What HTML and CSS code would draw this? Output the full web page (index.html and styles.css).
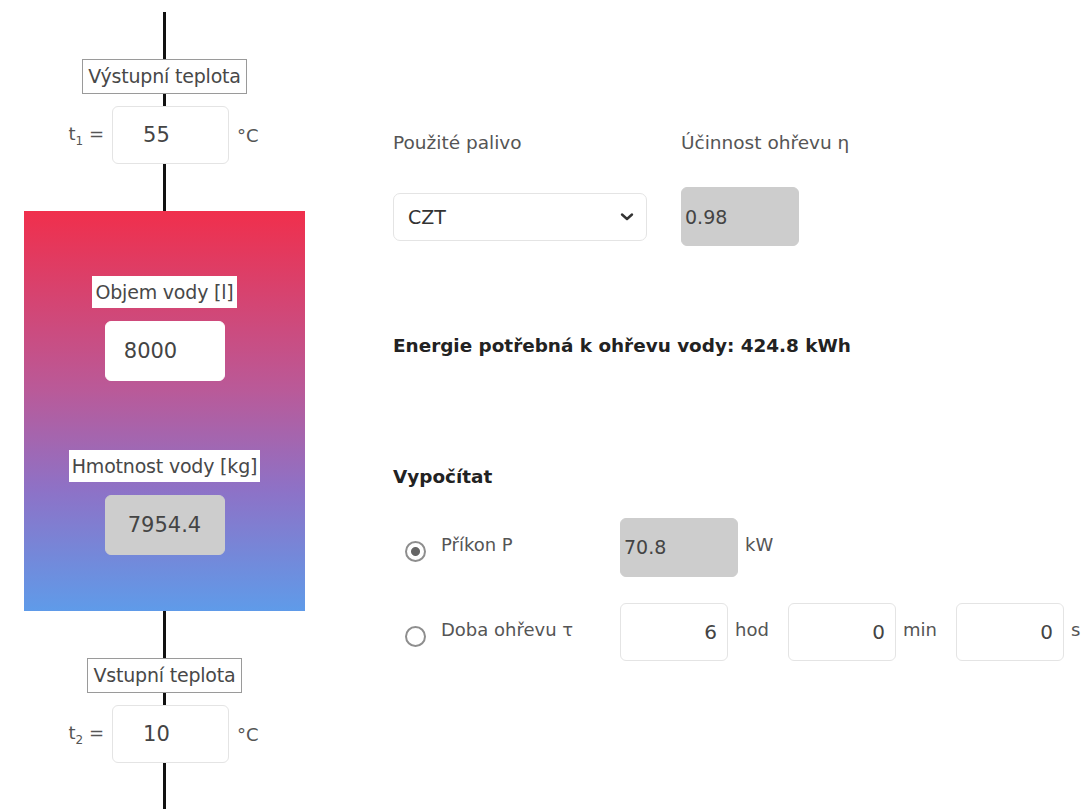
FILE: index.html
```html
<!DOCTYPE html>
<html lang="cs">
<head>
    <meta charset="UTF-8">
    <meta name="viewport" content="width=device-width, initial-scale=1.0">
    <title>Ohřev vody</title>
    <link rel="stylesheet" href="styles.css">
</head>
<body>
    <main class="page">
        <!-- schema of the tank -->
        <div class="scheme">
            <div class="pipe pipe-top"></div>
            <div class="tag tag-outer">Výstupní teplota</div>
            <div class="pipe pipe-short"></div>
            <div class="temp-row">
                <span class="temp-label">t<sub>1</sub> =</span>
                <input class="field field-temp" type="text" value="55">
                <span class="temp-unit">°C</span>
            </div>
            <div class="pipe pipe-long"></div>

            <div class="tank">
                <div class="tag">Objem vody [l]</div>
                <input class="field field-tank" type="text" value="8000">
                <div class="tag tag-mass">Hmotnost vody [kg]</div>
                <input class="field field-tank field-readonly field-center" type="text" value="7954.4" readonly>
            </div>

            <div class="pipe pipe-long"></div>
            <div class="tag tag-outer">Vstupní teplota</div>
            <div class="pipe pipe-short"></div>
            <div class="temp-row">
                <span class="temp-label">t<sub>2</sub> =</span>
                <input class="field field-temp" type="text" value="10">
                <span class="temp-unit">°C</span>
            </div>
            <div class="pipe pipe-end"></div>
        </div>

        <!-- calculation panel -->
        <div class="panel">
            <div class="fuel-grid">
                <label class="caption" for="palivo">Použité palivo</label>
                <span class="caption">Účinnost ohřevu η</span>
                <div class="select-wrap">
                    <select id="palivo" class="select">
                        <option>CZT</option>
                        <option>Zemní plyn</option>
                        <option>Elektřina</option>
                    </select>
                    <svg class="chevron" width="14" height="10" viewBox="0 0 14 10">
                        <path d="M2 2.5 L7 7 L12 2.5" fill="none" stroke="#333" stroke-width="2.4" stroke-linecap="round" stroke-linejoin="round"/>
                    </svg>
                </div>
                <input class="field field-small field-readonly" type="text" value="0.98" readonly>
            </div>

            <p class="energy">Energie potřebná k ohřevu vody: 424.8 kWh</p>

            <h3 class="calc-title">Vypočítat</h3>

            <div class="calc-row">
                <input class="radio" type="radio" name="mode" id="prikon" checked>
                <label class="calc-label" for="prikon">Příkon P</label>
                <input class="field field-small field-readonly" type="text" value="70.8" readonly>
                <span class="unit">kW</span>
            </div>

            <div class="calc-row calc-row-time">
                <input class="radio" type="radio" name="mode" id="doba">
                <label class="calc-label" for="doba">Doba ohřevu τ</label>
                <input class="field field-time" type="text" value="6">
                <span class="unit unit-time">hod</span>
                <input class="field field-time" type="text" value="0">
                <span class="unit unit-time">min</span>
                <input class="field field-time" type="text" value="0">
                <span class="unit">s</span>
            </div>
        </div>
    </main>
</body>
</html>
```

FILE: styles.css
```css
body {
    margin: 0;
    padding: 0;
    background: #fff;
    font-family: 'DejaVu Sans', Verdana, sans-serif;
    font-size: 19px;
    color: #444;
    overflow: hidden;
}

.page {
    display: flex;
    align-items: flex-start;
    padding-left: 24px;
}

/* left side: tank and pipes */
.scheme {
    width: 281px;
    padding-top: 12px;
    display: flex;
    flex-direction: column;
    align-items: center;
}

.pipe {
    width: 3px;
    background-color: #111;
}

.pipe-top {
    height: 47px;
}

.pipe-short {
    height: 12px;
}

.pipe-long {
    height: 47px;
}

.pipe-end {
    height: 60px;
}

.tag {
    background-color: #fff;
    padding: 0 3px;
    height: 32px;
    line-height: 32px;
    color: #484848;
    white-space: nowrap;
    letter-spacing: -0.2px;
}

.tag-outer {
    border: 1px solid #9a9a9a;
    padding: 0 5px;
    height: 33px;
    line-height: 33px;
}

.temp-row {
    display: flex;
    align-items: center;
    gap: 8px;
    margin-right: 2px;
}

.temp-label,
.temp-unit {
    color: #555;
    font-size: 18px;
}

.temp-label sub {
    font-size: 12px;
}

.field {
    box-sizing: border-box;
    font-family: 'DejaVu Sans', Verdana, sans-serif;
    font-size: 20px;
    color: #444;
    background-color: #fff;
    border: 1px solid #e4e4e4;
    border-radius: 6px;
    outline: none;
    margin: 0;
}

.field-temp {
    width: 117px;
    height: 58px;
    text-align: center;
    padding: 0 28px 0 0;
    font-size: 21px;
}

.field-readonly {
    background-color: #cdcdcd;
    border-color: #cdcdcd;
}

.tank {
    width: 281px;
    height: 400px;
    box-sizing: border-box;
    padding-top: 65px;
    background: linear-gradient(180deg, #f02f4c 0%, #b95a99 45%, #8d72c7 70%, #5f9be9 100%);
    display: flex;
    flex-direction: column;
    align-items: center;
}

.field-tank {
    width: 120px;
    height: 60px;
    margin-top: 13px;
    text-align: center;
    padding: 0 28px 0 0;
    border-color: #fff;
    font-size: 21px;
}

.field-tank.field-center {
    padding: 0;
    border-color: #cdcdcd;
}

.tag-mass {
    margin-top: 69px;
}

/* right side: form */
.panel {
    margin-left: 88px;
    padding-top: 131px;
}

.fuel-grid {
    display: grid;
    grid-template-columns: 254px 118px;
    grid-template-rows: 24px auto;
    column-gap: 34px;
    row-gap: 32px;
    align-items: center;
}

.caption {
    font-size: 18.5px;
    color: #555;
    line-height: 24px;
    white-space: nowrap;
}

.select-wrap {
    position: relative;
    height: 48px;
}

.select {
    appearance: none;
    -webkit-appearance: none;
    width: 100%;
    height: 48px;
    box-sizing: border-box;
    padding: 0 14px;
    font-family: 'DejaVu Sans', Verdana, sans-serif;
    font-size: 19px;
    color: #333;
    background-color: #fff;
    border: 1px solid #e4e4e4;
    border-radius: 7px;
    outline: none;
}

.chevron {
    position: absolute;
    right: 13px;
    top: 19px;
    pointer-events: none;
}

.field-small {
    width: 118px;
    height: 59px;
    padding: 0 3px;
    font-size: 19px;
}

.energy {
    margin: 88px 0 0;
    line-height: 24px;
    font-weight: bold;
    color: #222;
    font-size: 18.4px;
}

.calc-title {
    margin: 107px 0 0;
    line-height: 24px;
    font-size: 18.4px;
    color: #222;
}

.calc-row {
    display: flex;
    align-items: center;
    margin-top: 29px;
    height: 58px;
}

.calc-row-time {
    margin-top: 27px;
}

.radio {
    appearance: none;
    -webkit-appearance: none;
    width: 21px;
    height: 21px;
    margin: 8px 0 0 12px;
    box-sizing: border-box;
    border: 2px solid #8e8e8e;
    border-radius: 50%;
    background: #fff;
}

.radio:checked {
    background: radial-gradient(circle, #666 0 4px, #fff 5px);
}

.calc-label {
    width: 179px;
    margin-left: 15px;
    margin-bottom: 6px;
    color: #555;
    font-size: 18px;
    white-space: nowrap;
}

.unit {
    color: #555;
    margin: 0 0 6px 7px;
    font-size: 18px;
}

.unit-time {
    width: 53px;
}

.field-time {
    width: 108px;
    height: 58px;
    text-align: right;
    padding: 0 10px 0 0;
    font-size: 20px;
}
```
